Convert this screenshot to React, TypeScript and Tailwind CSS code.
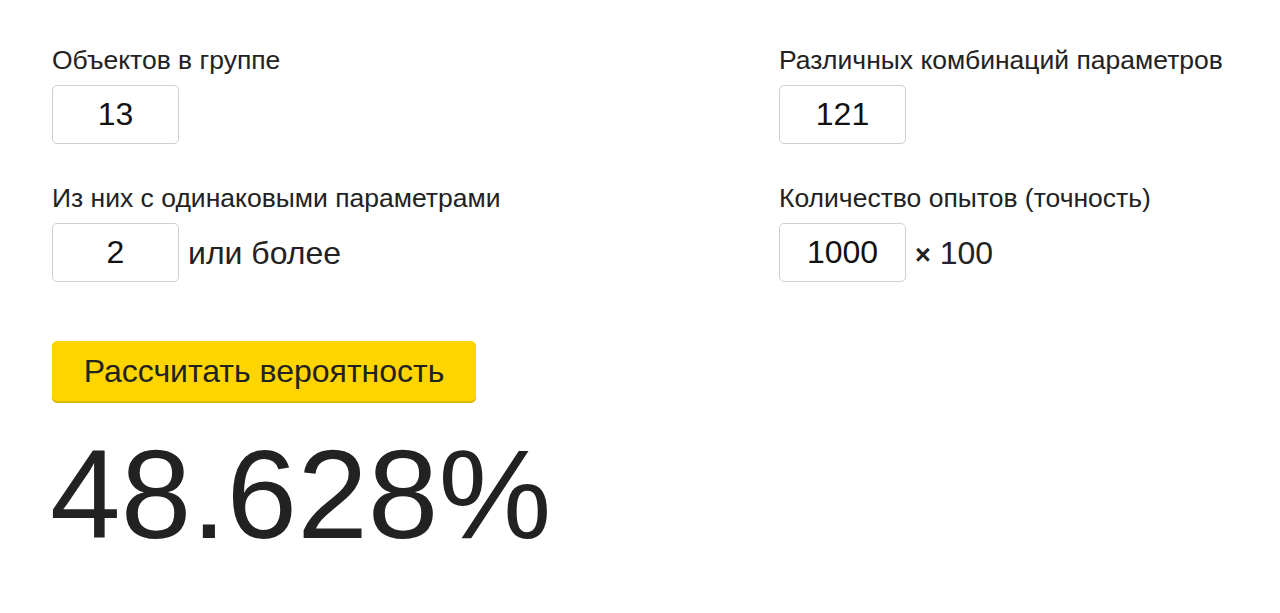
import React, { useState } from 'react';

const font = { fontFamily: '"Liberation Sans", Arial, sans-serif' };

interface FieldProps {
  label: string;
  value: string;
  onChange: (v: string) => void;
  suffix?: React.ReactNode;
}

const Field: React.FC<FieldProps> = ({ label, value, onChange, suffix }) => (
  <div>
    <div className="text-[26.5px] leading-[30px] text-[#222]">{label}</div>
    <div className="mt-[10px] flex items-center gap-[9px]">
      <input
        type="text"
        value={value}
        onChange={e => onChange(e.target.value)}
        className="w-[127px] h-[59px] border border-[#d0d0d0] rounded-[5px] text-center text-[32px] text-[#111] outline-none bg-white"
        style={font}
      />
      {suffix && <span className="text-[32px] text-[#222]">{suffix}</span>}
    </div>
  </div>
);

export default function App() {
  const [objects, setObjects] = useState('13');
  const [same, setSame] = useState('2');
  const [combos, setCombos] = useState('121');
  const [trials, setTrials] = useState('1000');

  return (
    <div className="min-h-screen bg-white pl-[52px] pt-[45px]" style={font}>
      <div className="grid grid-cols-[727px_1fr] gap-y-[39px]">
        <Field label="Объектов в группе" value={objects} onChange={setObjects} />
        <Field label="Различных комбинаций параметров" value={combos} onChange={setCombos} />
        <Field label="Из них с одинаковыми параметрами" value={same} onChange={setSame} suffix="или более" />
        <Field
          label="Количество опытов (точность)"
          value={trials}
          onChange={setTrials}
          suffix={<><span className="text-[27px] font-bold">×</span> 100</>}
        />
      </div>

      <button className="block mt-[59px] w-[424px] h-[60px] rounded-[5px] bg-[#ffd500] shadow-[0_2px_0_#dcb800] text-[32px] text-[#222]">
        Рассчитать вероятность
      </button>

      <div className="mt-[18px] text-[127px] leading-[150px] text-[#222] -ml-[2px]">48.628%</div>
    </div>
  );
}
